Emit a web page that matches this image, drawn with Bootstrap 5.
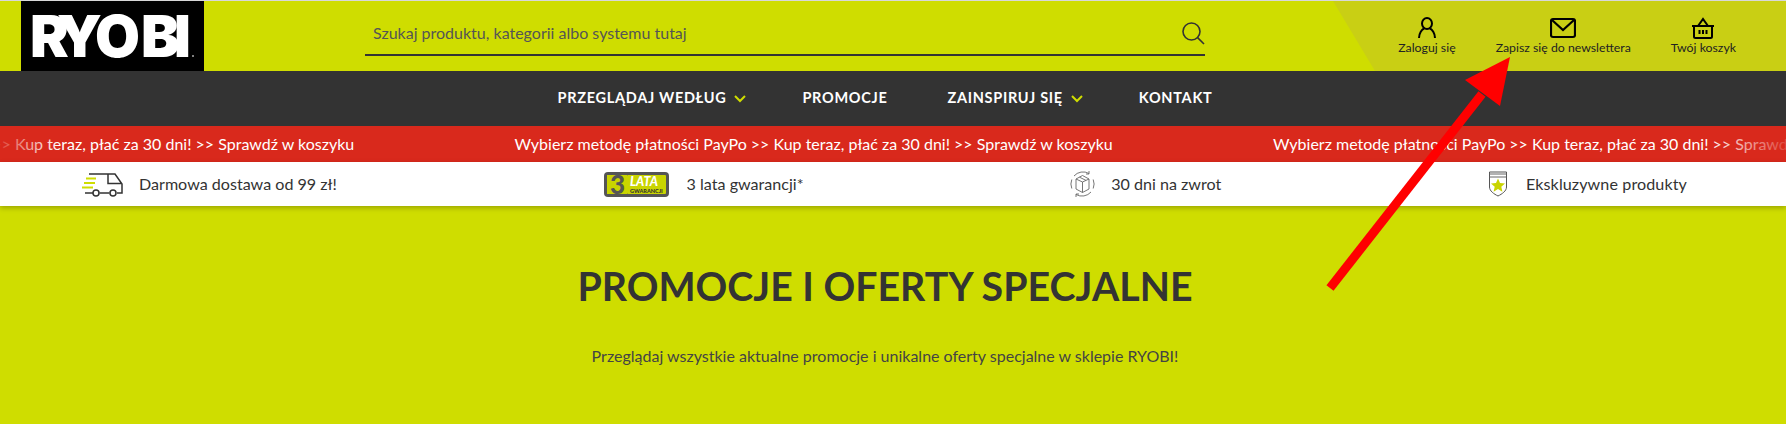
<!DOCTYPE html>
<html lang="pl">
<head>
    <meta charset="UTF-8">
    <meta name="viewport" content="width=device-width, initial-scale=1.0">
    <title>RYOBI - Promocje</title>
    <link href="https://cdn.jsdelivr.net/npm/bootstrap@5.3.0/dist/css/bootstrap.min.css" rel="stylesheet">
    <script src="https://cdn.jsdelivr.net/npm/bootstrap@5.3.0/dist/js/bootstrap.bundle.min.js"></script>
    <style>
        html, body { height: 424px; overflow: hidden; }
        body {
            font-family: "Lato", "Liberation Sans", sans-serif;
            background-color: #cfdd00;
            color: #333;
            border-top: 1px solid #d8d8d8;
        }
        .top-bar { height: 70px; background-color: #cfdd00; }
        .top-bar-shade {
            top: 0; bottom: 0; right: 0; width: 453px;
            background-color: #c9cf14;
            clip-path: polygon(0 0, 100% 0, 100% 100%, 42px 100%);
        }
        .logo-box { width: 183px; height: 70px; margin-left: 21px; background: #000; }
        .search-box {
            width: 840px; height: 55px; margin-left: 161px; padding-top: 10px;
            border-bottom: 2px solid #333;
        }
        .search-box input {
            background: transparent; border: 0; box-shadow: none !important;
            padding: 0 0 0 8px; font-size: 16px; color: #555;
        }
        .search-box input::placeholder { color: #555; opacity: 1; }
        .search-box input:focus { background: transparent; }
        .account-links { gap: 40px; padding-right: 50px; padding-top: 16px; }
        .account-link { color: #222; font-size: 12.3px; text-decoration: none; line-height: 14px; }
        .account-link svg { display: block; margin: 0 auto 2px; }
        .main-menu { height: 55px; padding: 0 16px 2px 0; background-color: #333; }
        .main-menu a {
            color: #fff; font-weight: 700; font-size: 14.5px; letter-spacing: .7px;
            text-decoration: none; text-transform: uppercase;
        }
        .menu-list svg { margin-left: 8px; }
        .gap-after-drop { margin-right: 56px; }
        .gap-after-link { margin-right: 60px; }
        .promo-strip { height: 36px; background-color: #d9291c; color: #fff; font-size: 16px; }
        .promo-track { margin-left: -244px; }
        .promo-item { flex: 0 0 758.5px; white-space: nowrap; }
        .promo-fade-l, .promo-fade-r { top: 0; bottom: 0; }
        .promo-fade-l { left: 0; width: 60px; background: linear-gradient(to right, rgba(217,41,28,.85), rgba(217,41,28,0)); }
        .promo-fade-r { right: 0; width: 80px; background: linear-gradient(to left, rgba(217,41,28,.85), rgba(217,41,28,0)); }
        .perks-row {
            height: 44px; padding: 0 99px 0 82px; background: #fff; font-size: 16.1px;
            box-shadow: 0 2px 5px rgba(0,0,0,.25);
        }
        .perk-icon { margin-right: 16px; }
        .perk-badge { margin-right: 18px; }
        .perk-shield { margin-right: 18px; }
        .perk-wide { letter-spacing: .1px; }
        .promo-head { padding: 56px 16px 0 0; }
        .promo-title { font-size: 39.3px; font-weight: 700; line-height: 48px; margin: 0; color: #333; }
        .promo-intro { font-size: 16px; margin: 0; color: #444; padding-top: 34px; }
        .red-arrow { top: 0; left: 0; pointer-events: none; }
    </style>
</head>
<body class="position-relative">

    <!-- header -->
    <div class="top-bar position-relative d-flex align-items-start">
        <div class="top-bar-shade position-absolute"></div>
        <div class="logo-box flex-shrink-0 position-relative">
            <svg width="183" height="70" viewBox="0 0 183 70">
                <text y="56" x="9 36 74 120 153" fill="#fff" font-family="Inter, Lato, sans-serif" font-weight="900" font-size="58">RYOBI</text>
                <circle cx="172" cy="55" r="1" fill="#aaa"/>
            </svg>
        </div>
        <div class="search-box d-flex align-items-center flex-shrink-0 position-relative">
            <input type="text" class="form-control" placeholder="Szukaj produktu, kategorii albo systemu tutaj">
            <svg class="flex-shrink-0" width="24" height="24" viewBox="0 0 24 24" fill="none" stroke="#333" stroke-width="1.6">
                <circle cx="10.500" cy="10.500" r="8.500"/>
                <path d="M16.600 16.600 23 23"/>
            </svg>
        </div>
        <div class="account-links d-flex ms-auto position-relative">
            <a class="account-link text-center" href="#">
                <svg width="20" height="22" viewBox="0 0 20 22" fill="none" stroke="#000" stroke-width="2">
                    <ellipse cx="10" cy="6.500" rx="5" ry="5.500"/>
                    <path d="M2 21c0-5 3-8.500 5-9.500M18 21c0-5-3-8.500-5-9.500"/>
                </svg>
                Zaloguj się
            </a>
            <a class="account-link text-center" href="#">
                <svg width="26" height="22" viewBox="0 0 26 22" fill="none" stroke="#000" stroke-width="2.200">
                    <rect x="1" y="2" width="24" height="18" rx="2"/>
                    <path d="M2 3l11 10L24 3"/>
                </svg>
                Zapisz się do newslettera
            </a>
            <a class="account-link text-center" href="#">
                <svg width="24" height="22" viewBox="0 0 24 22" fill="none" stroke="#000" stroke-width="2">
                    <path d="M1 9h22M3 9v10.500a1.500 1.500 0 0 0 1.500 1.500h15a1.500 1.500 0 0 0 1.500-1.500V9M7 9l5-7 5 7M8.500 13v4M12 13v4M15.500 13v4"/>
                </svg>
                Twój koszyk
            </a>
        </div>
    </div>

    <!-- main menu -->
    <div class="main-menu d-flex align-items-center justify-content-center">
        <div class="menu-list d-flex align-items-center">
            <a href="#" class="gap-after-drop">Przeglądaj według<svg width="12" height="8" viewBox="0 0 12 8" fill="none" stroke="#cfdd00" stroke-width="2"><path d="M1 1l5 5 5-5"/></svg></a>
            <a href="#" class="gap-after-link">Promocje</a>
            <a href="#" class="gap-after-drop">Zainspiruj się<svg width="12" height="8" viewBox="0 0 12 8" fill="none" stroke="#cfdd00" stroke-width="2"><path d="M1 1l5 5 5-5"/></svg></a>
            <a href="#">Kontakt</a>
        </div>
    </div>

    <!-- scrolling promo text -->
    <div class="promo-strip position-relative overflow-hidden d-flex align-items-center">
        <div class="promo-track d-flex">
            <span class="promo-item">Wybierz metodę płatności PayPo &gt;&gt; Kup teraz, płać za 30 dni! &gt;&gt; Sprawdź w koszyku</span>
            <span class="promo-item">Wybierz metodę płatności PayPo &gt;&gt; Kup teraz, płać za 30 dni! &gt;&gt; Sprawdź w koszyku</span>
            <span class="promo-item">Wybierz metodę płatności PayPo &gt;&gt; Kup teraz, płać za 30 dni! &gt;&gt; Sprawdź w koszyku</span>
        </div>
        <div class="promo-fade-l position-absolute"></div>
        <div class="promo-fade-r position-absolute"></div>
    </div>

    <!-- perks -->
    <div class="perks-row d-flex align-items-center justify-content-between position-relative">
        <div class="d-flex align-items-center">
            <svg class="perk-icon" width="41" height="26" viewBox="0 0 41 26" fill="none" stroke="#333" stroke-width="1.500">
                <path d="M7 3H33L40 13V22H35M26 3V12.500H39.500M3 22H11M17.500 22H27.500"/>
                <circle cx="14" cy="22" r="3"/>
                <circle cx="31" cy="22" r="3"/>
                <path d="M4 7.500H14M2 12H13M0 16.500H11" stroke="#cfdd00" stroke-width="2"/>
            </svg>
            <span>Darmowa dostawa od 99 zł!</span>
        </div>
        <div class="d-flex align-items-center">
            <svg class="perk-badge" width="65" height="25" viewBox="0 0 65 25">
                <rect width="65" height="25" rx="4" fill="#555"/>
                <rect x="3" y="3" width="20" height="19" fill="#c9d400"/>
                <rect x="23" y="3" width="39" height="19" rx="1" fill="#c9d400"/>
                <text x="6" y="21.500" font-family="Lato, sans-serif" font-weight="900" font-size="26" fill="#555">3</text>
                <text x="26" y="14" font-family="Lato, sans-serif" font-weight="900" font-style="italic" font-size="12.500" fill="#fff">LATA</text>
                <text x="26" y="20.500" font-family="Lato, sans-serif" font-weight="900" font-size="5.500" fill="#333">GWARANCJI</text>
            </svg>
            <span>3 lata gwarancji*</span>
        </div>
        <div class="d-flex align-items-center">
            <svg class="perk-icon" width="25" height="28" viewBox="0 0 25 28" fill="none" stroke="#666" stroke-width=".9">
                <path d="M4 6a12 12 0 0 1 15-2.500M21 22a12 12 0 0 1-15 2.500M19 1v3h-3M6 27v-3h3"/>
                <path d="M1.800 9.500a12 12 0 0 0 0 9M23.200 9.500a12 12 0 0 1 0 9"/>
                <path d="M6 9l6.500-3.500L19 9v10l-6.500 3.500L6 19zM6 9l6.500 3L19 9M12.500 12v10.500M9.500 7.200l6.500 3.200"/>
            </svg>
            <span>30 dni na zwrot</span>
        </div>
        <div class="d-flex align-items-center">
            <svg class="perk-shield" width="20" height="26" viewBox="0 0 20 26">
                <path d="M1.500 1h17v15c0 4-4.500 7-8.500 9-4-2-8.500-5-8.500-9z" fill="#fff" stroke="#555"/>
                <path d="M1.500 3h17M1.500 6h17" stroke="#666" stroke-width="1"/>
                <path d="M10 7.500l2 4.500 5 .5-3.700 3.200 1.100 5-4.400-2.600-4.400 2.600 1.100-5L3 12.500l5-.5z" fill="#c9d400"/>
            </svg>
            <span class="perk-wide">Ekskluzywne produkty</span>
        </div>
    </div>

    <!-- page heading -->
    <div class="promo-head text-center">
        <h1 class="promo-title">PROMOCJE I OFERTY SPECJALNE</h1>
        <p class="promo-intro">Przeglądaj wszystkie aktualne promocje i unikalne oferty specjalne w sklepie RYOBI!</p>
    </div>

    <!-- annotation arrow -->
    <svg class="red-arrow position-absolute" width="1786" height="424" viewBox="0 0 1786 424">
        <path d="M1482 93 1330 287" stroke="#f00" stroke-width="9" fill="none"/>
        <path d="M1510 56 1465 79 1500 105z" fill="#f00"/>
    </svg>

</body>
</html>
